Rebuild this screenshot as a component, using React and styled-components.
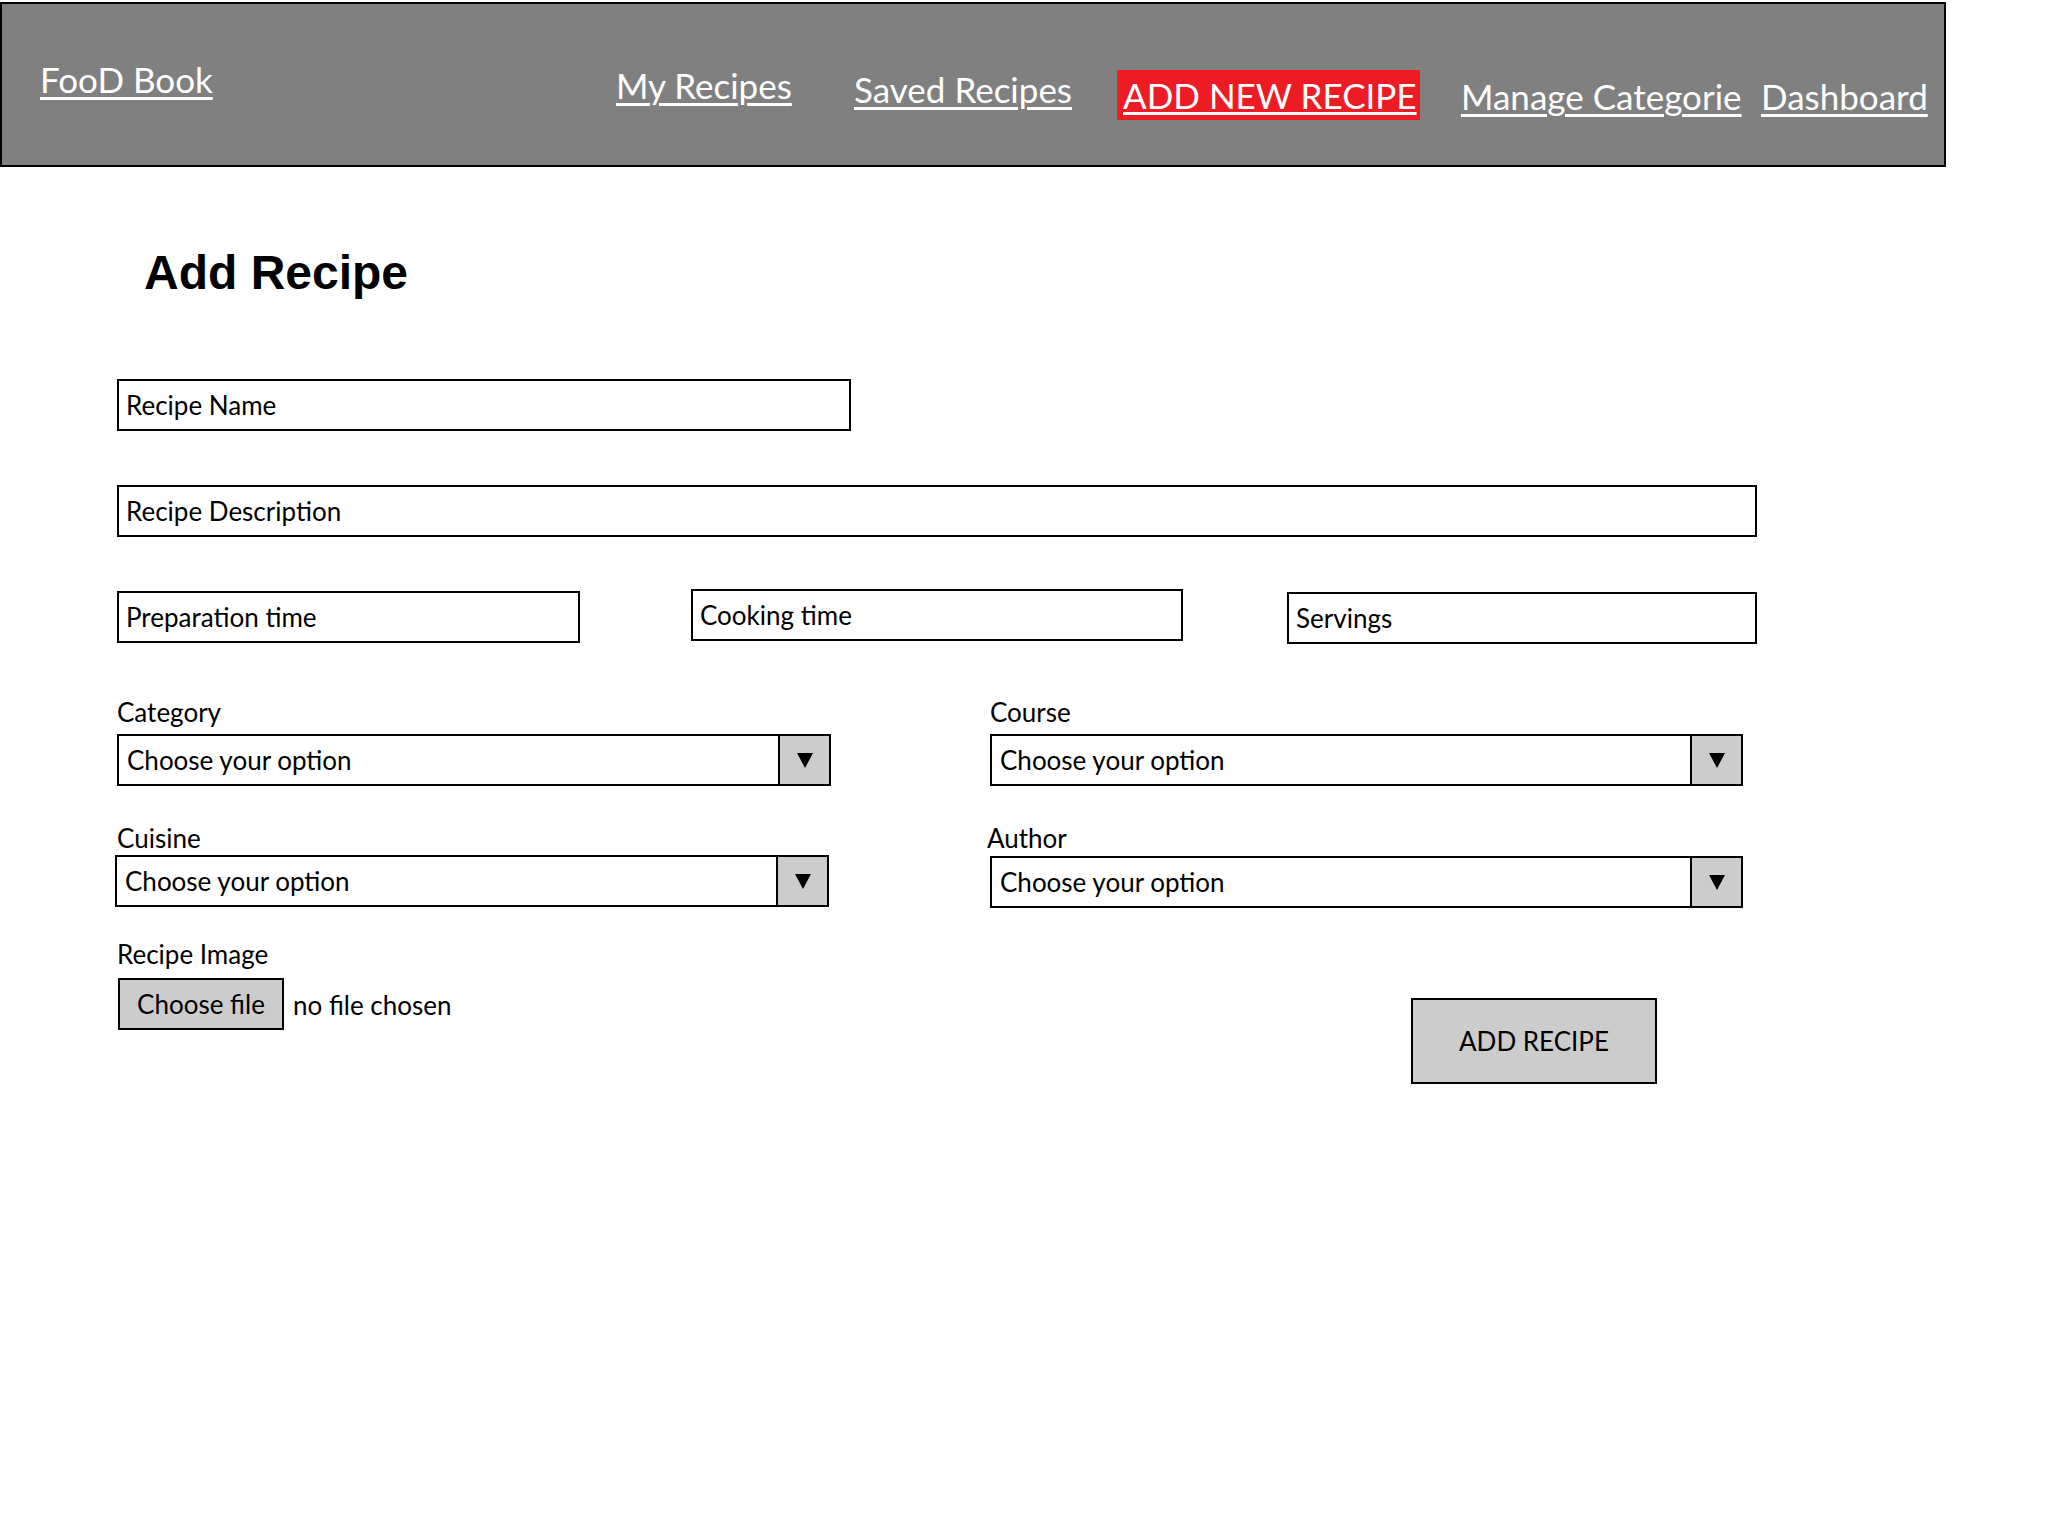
import React from 'react';
import styled, { createGlobalStyle } from 'styled-components';

const GlobalStyle = createGlobalStyle`
  html, body {
    margin: 0;
    background: #fff;
    color: #000;
    font-family: "Lato", "Open Sans", sans-serif;
  }
`;

const Page = styled.div`
  width: 2048px;
  min-height: 1536px;
  padding-top: 2px;
  box-sizing: border-box;
  background: #fff;
`;

const Header = styled.header`
  display: flex;
  align-items: flex-start;
  box-sizing: border-box;
  width: 1946px;
  height: 165px;
  background: #808080;
  border: 2px solid #000;
`;

const NavLink = styled.a`
  display: block;
  margin-top: ${(p) => p.$top}px;
  margin-left: ${(p) => p.$left}px;
  width: ${(p) => p.$width}px;
  font-size: 35px;
  line-height: 42px;
  color: #fff;
  white-space: nowrap;
  text-decoration: underline;
  text-decoration-thickness: 3px;
  text-underline-offset: 4px;
  cursor: pointer;
`;

const ActiveLink = styled.div`
  box-sizing: border-box;
  width: 303px;
  height: 50px;
  margin-top: 66px;
  margin-left: 42px;
  padding: 4px 6px 0 6px;
  background: #ed1c24;
  font-size: 35px;
  line-height: 42px;
  color: #fff;
  white-space: nowrap;
  text-decoration: underline;
  text-decoration-thickness: 3px;
  text-underline-offset: 3px;
`;

const Title = styled.h1`
  margin: 78px 0 0 144px;
  font-family: "Liberation Sans", Arial, sans-serif;
  font-size: 48px;
  line-height: 56px;
  font-weight: 700;
`;

const Form = styled.form`
  display: flex;
  flex-direction: column;
  padding-left: 117px;
`;

const Row = styled.div`
  display: flex;
  align-items: flex-start;
  margin-top: ${(p) => p.$top}px;
`;

const TextBox = styled.input`
  display: block;
  box-sizing: border-box;
  width: ${(p) => p.$width}px;
  height: 52px;
  margin-top: ${(p) => p.$top || 0}px;
  margin-left: ${(p) => p.$left || 0}px;
  padding: 0 7px;
  background: #fff;
  border: 2px solid #000;
  border-radius: 0;
  outline: none;
  font-family: inherit;
  font-size: 26px;
  color: #000;
  &::placeholder {
    color: #000;
    opacity: 1;
  }
`;

const Field = styled.div`
  display: flex;
  flex-direction: column;
  width: ${(p) => p.$width}px;
  margin-left: ${(p) => p.$left || 0}px;
`;

const Label = styled.label`
  display: block;
  height: 30px;
  margin-left: ${(p) => p.$indent || 0}px;
  margin-bottom: ${(p) => p.$gap}px;
  font-size: 26px;
  line-height: 30px;
`;

const Select = styled.div`
  display: flex;
  align-items: center;
  box-sizing: border-box;
  height: 52px;
  background: #fff;
  border: 2px solid #000;
`;

const SelectText = styled.span`
  flex: 1;
  padding-left: 8px;
  font-size: 26px;
`;

const Arrow = styled.span`
  display: flex;
  align-items: center;
  justify-content: center;
  width: 49px;
  height: 100%;
  background: #ccc;
  border-left: 2px solid #000;
  &::after {
    content: "";
    border-left: 8px solid transparent;
    border-right: 8px solid transparent;
    border-top: 15px solid #000;
  }
`;

const FileRow = styled.div`
  display: flex;
  align-items: center;
  gap: 9px;
`;

const FileButton = styled.button`
  box-sizing: border-box;
  width: 166px;
  height: 52px;
  margin-left: 1px;
  padding: 0;
  background: #ccc;
  border: 2px solid #000;
  border-radius: 0;
  font-family: inherit;
  font-size: 26px;
  color: #000;
`;

const FileName = styled.span`
  font-size: 26px;
  margin-top: 2px;
`;

const SubmitButton = styled.button`
  box-sizing: border-box;
  width: 246px;
  height: 86px;
  margin-top: 59px;
  margin-left: 421px;
  padding: 0;
  background: #ccc;
  border: 2px solid #000;
  border-radius: 0;
  font-family: inherit;
  font-size: 26px;
  color: #000;
`;

function SelectField({ label, width, left, indent, gap }) {
  return (
    <Field $width={width} $left={left}>
      <Label $gap={gap} $indent={indent}>{label}</Label>
      <Select>
        <SelectText>Choose your option</SelectText>
        <Arrow />
      </Select>
    </Field>
  );
}

export default function App() {
  return (
    <Page>
      <GlobalStyle />
      <Header>
        <NavLink $top={54} $left={38} $width={163}>FooD Book</NavLink>
        <NavLink $top={60} $left={413} $width={174}>My Recipes</NavLink>
        <NavLink $top={64} $left={64} $width={221}>Saved Recipes</NavLink>
        <ActiveLink>ADD NEW RECIPE</ActiveLink>
        <NavLink $top={71} $left={41} $width={277}>Manage Categorie</NavLink>
        <NavLink $top={71} $left={23} $width={163}>Dashboard</NavLink>
      </Header>
      <Title>Add Recipe</Title>
      <Form>
        <Row $top={78}>
          <TextBox $width={734} placeholder="Recipe Name" />
        </Row>
        <Row $top={54}>
          <TextBox $width={1640} placeholder="Recipe Description" />
        </Row>
        <Row $top={52}>
          <TextBox $width={463} $top={2} placeholder="Preparation time" />
          <TextBox $width={492} $left={111} placeholder="Cooking time" />
          <TextBox $width={470} $left={104} $top={3} placeholder="Servings" />
        </Row>
        <Row $top={53}>
          <SelectField label="Category" width={714} gap={7} />
          <SelectField label="Course" width={753} left={159} gap={7} />
        </Row>
        <Row $top={37}>
          <SelectField label="Cuisine" width={714} left={-2} indent={2} gap={2} />
          <SelectField label="Author" width={753} left={161} indent={-3} gap={3} />
        </Row>
        <Row $top={31}>
          <Field $width={873}>
            <Label $gap={9}>Recipe Image</Label>
            <FileRow>
              <FileButton type="button">Choose file</FileButton>
              <FileName>no file chosen</FileName>
            </FileRow>
          </Field>
          <SubmitButton type="button">ADD RECIPE</SubmitButton>
        </Row>
      </Form>
    </Page>
  );
}
